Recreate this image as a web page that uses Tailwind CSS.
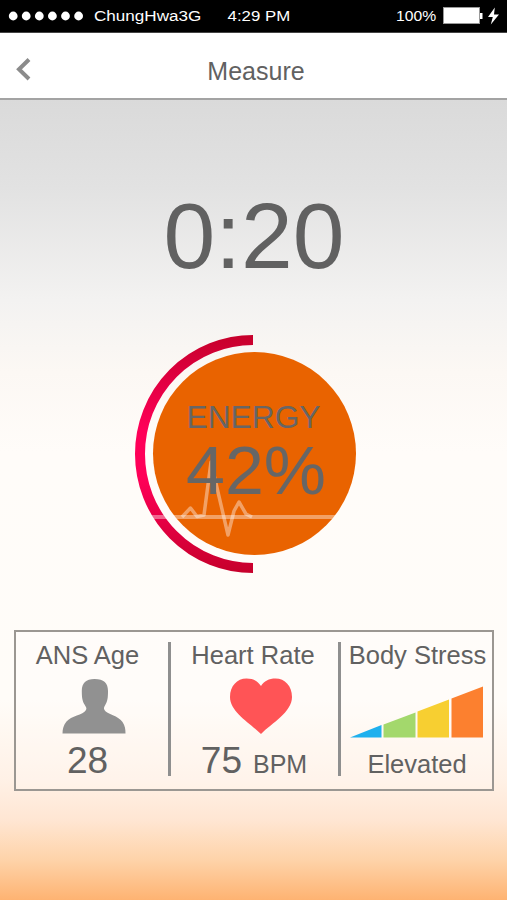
<!DOCTYPE html>
<html lang="en">
<head>
  <meta charset="UTF-8" />
  <meta name="viewport" content="width=device-width, initial-scale=1.0"/>
  <title>Measure</title>
  <script src="https://cdn.jsdelivr.net/npm/@tailwindcss/browser@4"></script>
</head>
<body class="w-[507px] h-[900px] overflow-hidden flex flex-col bg-white text-[#616161] font-['Liberation_Sans',Arial,sans-serif]">
  <!-- Status bar -->
  <div class="h-[33px] shrink-0 bg-black border-b border-[#444] text-white text-[14px] leading-8 flex items-center pl-2 pr-[7px]">
    <svg class="w-[76px] h-[10px]" viewBox="0 0 76 10" fill="#fff">
      <circle cx="5.2" cy="5" r="4.4"/><circle cx="18.2" cy="5" r="4.4"/><circle cx="31.3" cy="5" r="4.4"/>
      <circle cx="44.4" cy="5" r="4.4"/><circle cx="57.5" cy="5" r="4.4"/><circle cx="70.6" cy="5" r="4.4"/>
    </svg>
    <span class="w-[134px] pl-[10px]"><span class="inline-block origin-left scale-x-[1.22]">ChungHwa3G</span></span>
    <span class="inline-block origin-left scale-x-[1.2] pl-[8px]">4:29 PM</span>
    <span class="ml-auto w-[47px]"><span class="inline-block origin-left scale-x-[1.12]">100%</span></span>
    <svg class="w-[57px] h-[18px]" viewBox="0 0 57 18">
      <rect x="0.5" y="0.5" width="36" height="16" fill="#fff" stroke="#999" stroke-width="1"/>
      <path d="M37 6h2.500v6h-2.500z" fill="#fff"/>
      <path d="M51.800 0.500L45 10h4.800l-2 7.500L56 7.500h-5z" fill="#fff"/>
    </svg>
  </div>

  <!-- Title bar -->
  <header class="h-[67px] shrink-0 border-b-2 border-[#a3a3a3] grid grid-cols-[60px_1fr_60px] items-center">
    <svg class="ml-4 mt-[6px] w-4 h-6" viewBox="0 0 16 24" fill="none" stroke="#8b8b8b" stroke-width="4">
      <path d="M13 2.500L3 12.300L13 22"/>
    </svg>
    <h1 class="text-[25px] leading-8 text-center pt-[11px] pl-[5px]">Measure</h1>
  </header>

  <main class="grow flex flex-col items-center bg-[linear-gradient(to_bottom,#dadada_0%,#e2e2e2_11%,#f3f2f1_25%,#fcf8f4_34%,#fffcf9_44%,#fffcf8_75%,#fff1e6_85%,#ffe6d3_90%,#fed3a9_95%,#feb372_100%)]">
    <div class="mt-[88px] h-24 text-[93px] leading-24 pl-[1px]">0:20</div>

    <!-- Energy dial -->
    <svg class="mt-[46px] w-[240px] h-[250px] shrink-0" viewBox="134 330 240 250">
      <defs>
        <linearGradient id="ring" gradientUnits="userSpaceOnUse" x1="0" y1="335" x2="0" y2="573">
          <stop offset="0" stop-color="#c6002b"/>
          <stop offset="0.4" stop-color="#ff0058"/>
          <stop offset="0.6" stop-color="#ff0058"/>
          <stop offset="1" stop-color="#c6002b"/>
        </linearGradient>
      </defs>
      <path d="M253 340A113 114 0 0 0 253 568" fill="none" stroke="url(#ring)" stroke-width="10"/>
      <circle cx="254.500" cy="453.500" r="101.500" fill="#e96300"/>
      <g fill="none" stroke="#fff" stroke-opacity="0.4" stroke-width="4">
        <path d="M151 517H336"/>
        <path d="M182 517L190.500 508L197 516.500L204 515L211 462L228 535L234 511L239 502L246 514L252 517" stroke-width="3.500" stroke-linejoin="round"/>
      </g>
      <g fill="#666">
        <text x="186.500" y="428" font-size="32" textLength="134" lengthAdjust="spacingAndGlyphs">ENERGY</text>
        <text x="186" y="493.500" font-size="69" textLength="140" lengthAdjust="spacingAndGlyphs">42%</text>
      </g>
    </svg>

    <!-- Results -->
    <section class="mt-[50px] w-[480px] h-[161px] shrink-0 border-2 border-[#9b9792] bg-white/20 grid grid-cols-[152px_3px_167px_3px_151px] text-[25px] leading-8">
      <div class="flex flex-col items-center pt-[7px] pr-[8px]">
        <div class="text-[25.5px]">ANS Age</div>
        <svg class="mt-2 ml-[13px] w-16 h-[56px]" viewBox="0 0 64 56" fill="#919191">
          <path d="M32.500 0C42 0 46 4 46 12C46 19 45.500 22 43.500 25.500C42 28 41.500 29 42.500 31C44.500 35 57 37 60.500 43C63 47 63.500 50 63.500 54.500H0.500C0.500 50 1.500 46 4.500 42.500C9 37 21 36 24 31C25 29 24 28 22.500 25.500C20.500 22 19.800 19 19.800 12C19.800 4 24 0 32.500 0Z"/>
        </svg>
        <div class="text-[37px] leading-9 mt-[8px]">28</div>
      </div>
      <div class="bg-[#8f8f8f] mt-[10px] h-[134px]"></div>
      <div class="flex flex-col items-center pt-[7px] pr-[2px]">
        <div class="text-[25.5px]">Heart Rate</div>
        <svg class="mt-[7px] ml-[15px] w-[62px] h-[57px]" viewBox="0 0 62 57" fill="#ff5456">
          <path d="M31 56C20 45 0 34 0 19C0 8 7 0.500 16.500 0.500C23 0.500 28 3 31 8C34 3 39 0.500 45.500 0.500C55 0.500 62 8 62 19C62 34 42 45 31 56Z"/>
        </svg>
        <div class="leading-9 mt-[8px] pl-[2px] whitespace-nowrap"><span class="text-[37px]">75</span> <span class="ml-[4px]">BPM</span></div>
      </div>
      <div class="bg-[#8f8f8f] mt-[10px] h-[134px]"></div>
      <div class="flex flex-col items-center pt-[7px] pl-[2px] whitespace-nowrap">
        <div class="text-[25.5px] pl-px">Body Stress</div>
        <svg class="mt-[15px] mr-[1px] w-[134px] h-[53px]" viewBox="0 0 134 53">
          <path d="M0 51.500L31.500 39V51.500Z" fill="#1fb0ee"/>
          <path d="M33.500 38.500L65.500 26.500V51.500H33.500Z" fill="#a3d86c"/>
          <path d="M67.500 25.500L99 13.500V51.500H67.500Z" fill="#f7cf31"/>
          <path d="M101.500 12.500L133 0.500V51.500H101.500Z" fill="#fc802f"/>
        </svg>
        <div class="text-[25.5px] mt-[9px]">Elevated</div>
      </div>
    </section>
  </main>
</body>
</html>
